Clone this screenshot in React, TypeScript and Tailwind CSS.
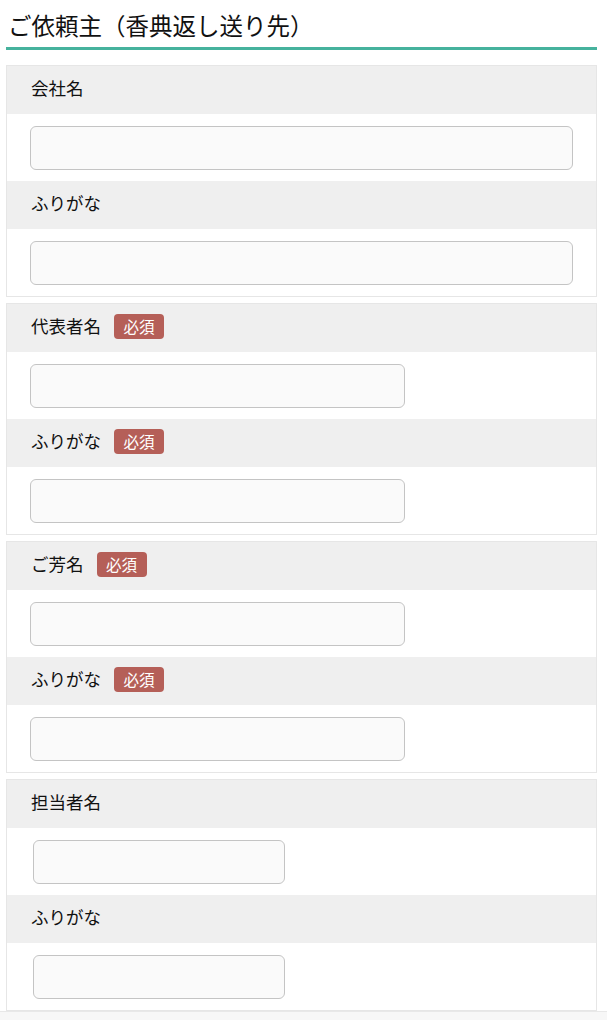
import React from "react";

// 依頼主フォームの各ブロック
type Field = { label: string; required?: boolean };
type Block = { fields: Field[]; inputClass: string };

const blocks: Block[] = [
  {
    fields: [{ label: "会社名" }, { label: "ふりがな" }],
    inputClass: "ml-[23px] mr-[23px] flex-1",
  },
  {
    fields: [
      { label: "代表者名", required: true },
      { label: "ふりがな", required: true },
    ],
    inputClass: "ml-[23px] w-[375px]",
  },
  {
    fields: [
      { label: "ご芳名", required: true },
      { label: "ふりがな", required: true },
    ],
    inputClass: "ml-[23px] w-[375px]",
  },
  {
    fields: [{ label: "担当者名" }, { label: "ふりがな" }],
    inputClass: "ml-[26px] w-[252px]",
  },
];

function Badge() {
  return (
    <span className="ml-[13px] inline-flex h-[25px] w-[50px] items-center justify-center rounded-[4px] bg-[#b55f58] text-[15.5px] leading-none text-white">
      必須
    </span>
  );
}

function FormBlock({ block }: { block: Block }) {
  return (
    <div className="mt-[6px] border border-[#e6e6e6] first:mt-0">
      {block.fields.map((f, i) => (
        <div key={i}>
          <div className="flex h-[48px] items-center bg-[#efefef] pb-[3px] pl-[24px] text-[17.5px] text-[#111]">
            <span>{f.label}</span>
            {f.required && <Badge />}
          </div>
          <div className="flex h-[67px] items-center bg-white">
            <input
              type="text"
              className={`h-[44px] rounded-[6px] border border-[#c4c4c4] bg-[#fafafa] px-2 outline-none ${block.inputClass}`}
            />
          </div>
        </div>
      ))}
    </div>
  );
}

export default function App() {
  return (
    <div className="min-h-[1020px] w-[607px] bg-white font-['Noto_Sans_CJK_JP','Noto_Sans',sans-serif]">
      <div className="pl-[6px] pr-[10px]">
        <h2 className="flex h-[50px] items-center border-b-[3px] border-[#46b29d] pl-[2px] pt-[5px] text-[23.5px] font-normal text-[#111]">
          ご依頼主（香典返し送り先）
        </h2>

        <div className="mt-[15px]">
          {blocks.map((b, i) => (
            <FormBlock key={i} block={b} />
          ))}
        </div>
      </div>

      <div className="h-[20px] border-t border-[#e8e8e8] bg-[#f7f7f7]" />
    </div>
  );
}
